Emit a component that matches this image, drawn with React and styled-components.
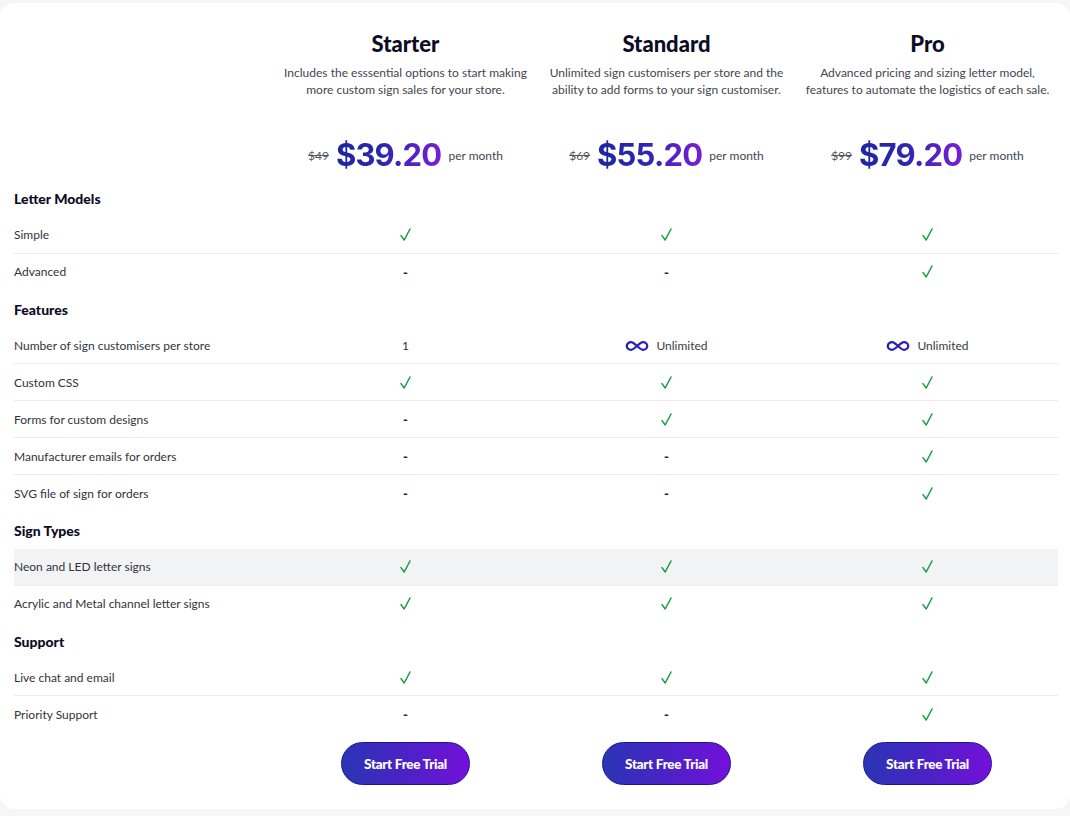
import styled, {createGlobalStyle} from "styled-components"

const GlobalStyle = createGlobalStyle`
	body {
		margin: 0;
		background: #f6f6f7;
		font-family: "Lato", "Noto Sans", sans-serif;
		color: #2b2b33;
	}
`

const plans = [
	{
		name: "Starter",
		desc: "Includes the esssential options to start making\nmore custom sign sales for your store.",
		old: "$49",
		price: "$39.20",
	},
	{
		name: "Standard",
		desc: "Unlimited sign customisers per store and the\nability to add forms to your sign customiser.",
		old: "$69",
		price: "$55.20",
	},
	{
		name: "Pro",
		desc: "Advanced pricing and sizing letter model,\nfeatures to automate the logistics of each sale.",
		old: "$99",
		price: "$79.20",
	},
]

const sections = [
	{
		title: "Letter Models",
		rows: [
			{label: "Simple", values: ["check", "check", "check"]},
			{label: "Advanced", values: ["dash", "dash", "check"]},
		],
	},
	{
		title: "Features",
		rows: [
			{label: "Number of sign customisers per store", values: ["1", "unlimited", "unlimited"]},
			{label: "Custom CSS", values: ["check", "check", "check"]},
			{label: "Forms for custom designs", values: ["dash", "check", "check"]},
			{label: "Manufacturer emails for orders", values: ["dash", "dash", "check"]},
			{label: "SVG file of sign for orders", values: ["dash", "dash", "check"]},
		],
	},
	{
		title: "Sign Types",
		rows: [
			{label: "Neon and LED letter signs", values: ["check", "check", "check"], hover: true},
			{label: "Acrylic and Metal channel letter signs", values: ["check", "check", "check"]},
		],
	},
	{
		title: "Support",
		rows: [
			{label: "Live chat and email", values: ["check", "check", "check"]},
			{label: "Priority Support", values: ["dash", "dash", "check"]},
		],
	},
]

const CheckIcon = () => (
	<svg width="11" height="13" viewBox="0 0 11 13">
		<path d="M1 7.6 L4.2 12 L10 1" fill="none" stroke="#1b9a47" strokeWidth="1.5" strokeLinecap="round" strokeLinejoin="round" />
	</svg>
)

const InfinityIcon = ({id}) => (
	<svg width="24" height="12" viewBox="0 0 24 12">
		<defs>
			<linearGradient id={id} x1="0" x2="1" y1="0" y2="0">
				<stop offset="0" stopColor="#1d24a6" />
				<stop offset="1" stopColor="#3a1cc0" />
			</linearGradient>
		</defs>
		<path
			d="M6.2 2.2 C3.6 2.2 1.8 3.9 1.8 6 C1.8 8.1 3.6 9.8 6.2 9.8 C9.4 9.8 14.6 2.2 17.8 2.2 C20.4 2.2 22.2 3.9 22.2 6 C22.2 8.1 20.4 9.8 17.8 9.8 C14.6 9.8 9.4 2.2 6.2 2.2 Z"
			fill="none"
			stroke={`url(#${id})`}
			strokeWidth="2.3"
		/>
	</svg>
)

const Cell = ({value, id}) => {
	if (value === "check") return <ValueCell><CheckIcon /></ValueCell>
	if (value === "dash") return <ValueCell><Dash>-</Dash></ValueCell>
	if (value === "unlimited")
		return (
			<ValueCell>
				<Unlimited>
					<InfinityIcon id={id} />
					<span>Unlimited</span>
				</Unlimited>
			</ValueCell>
		)
	return <ValueCell>{value}</ValueCell>
}

const App = () => {
	return (
		<>
			<GlobalStyle />
			<Card>
				<HeaderRow>
					<div />
					{plans.map((p) => (
						<PlanHeader key={p.name}>
							<PlanName>{p.name}</PlanName>
							<PlanDesc>{p.desc}</PlanDesc>
							<PriceLine>
								<OldPrice>{p.old}</OldPrice>
								<Price>{p.price}</Price>
								<PerMonth>per month</PerMonth>
							</PriceLine>
						</PlanHeader>
					))}
				</HeaderRow>

				{sections.map((s) => (
					<Section key={s.title}>
						<SectionTitle>{s.title}</SectionTitle>
						{s.rows.map((r, i) => (
							<Row key={r.label} $last={i === s.rows.length - 1} $hover={r.hover}>
								<Label>{r.label}</Label>
								{r.values.map((v, j) => (
									<Cell key={j} value={v} id={`inf-${i}-${j}`} />
								))}
							</Row>
						))}
					</Section>
				))}

				<ButtonRow>
					<div />
					{plans.map((p) => (
						<ButtonCell key={p.name}>
							<TrialButton type="button">Start Free Trial</TrialButton>
						</ButtonCell>
					))}
				</ButtonRow>
			</Card>
		</>
	)
}

export default App

const Card = styled.div`
	margin: 3px 0 0;
	height: 806px;
	box-sizing: border-box;
	background: #fff;
	border-radius: 14px;
	padding: 27px 12px 0 14px;
`

const grid = `
	display: grid;
	grid-template-columns: repeat(4, 261px);
`

const HeaderRow = styled.div`
	${grid}
	height: 150px;
`

const PlanHeader = styled.div`
	display: flex;
	flex-direction: column;
	align-items: center;
	text-align: center;
`

const PlanName = styled.div`
	font-size: 22px;
	font-weight: 900;
	line-height: 28px;
	color: #0c0c24;
`

const PlanDesc = styled.div`
	margin-top: 6px;
	font-size: 12px;
	line-height: 17px;
	color: #45454f;
	white-space: pre-line;
`

const PriceLine = styled.div`
	margin-top: 37px;
	display: flex;
	align-items: center;
	gap: 7px;
`

const OldPrice = styled.span`
	font-size: 12px;
	color: #55555f;
	text-decoration: line-through;
`

const Price = styled.span`
	font-family: "Inter", "Lato", sans-serif;
	font-size: 31px;
	font-weight: 700;
	letter-spacing: -0.8px;
	line-height: 40px;
	background: linear-gradient(90deg, #1b27a3 0%, #2d26b0 45%, #7a1ed6 100%);
	-webkit-background-clip: text;
	background-clip: text;
	color: transparent;
`

const PerMonth = styled.span`
	font-size: 12px;
	color: #45454f;
`

const Section = styled.div``

const SectionTitle = styled.div`
	height: 36.9px;
	display: flex;
	align-items: center;
	font-size: 14px;
	font-weight: 900;
	color: #0c0c24;
`

const Row = styled.div`
	${grid}
	height: 36.9px;
	box-sizing: border-box;
	align-items: center;
	background: ${(p) => (p.$hover ? "#f2f3f4" : "transparent")};
	border-bottom: 1px solid ${(p) => (p.$last ? "transparent" : "#ececee")};
`

const Label = styled.div`
	font-size: 12px;
	color: #33333b;
`

const ValueCell = styled.div`
	display: flex;
	justify-content: center;
	align-items: center;
	font-size: 12px;
	color: #33333b;
`

const Dash = styled.span`
	font-weight: 900;
	font-size: 13px;
	color: #222;
`

const Unlimited = styled.span`
	display: flex;
	align-items: center;
	gap: 7px;
	color: #3a3a44;
`

const ButtonRow = styled.div`
	${grid}
	margin-top: 9px;
`

const ButtonCell = styled.div`
	display: flex;
	justify-content: center;
`

const TrialButton = styled.button`
	width: 129px;
	height: 43px;
	border-radius: 22px;
	border: 1px solid #1a1596;
	background: linear-gradient(90deg, #2a35b4 0%, #4b22c6 50%, #7410d9 100%);
	color: #fff;
	font-family: "Lato", sans-serif;
	font-size: 13.5px;
	font-weight: 900;
	letter-spacing: -0.3px;
	cursor: pointer;
`
